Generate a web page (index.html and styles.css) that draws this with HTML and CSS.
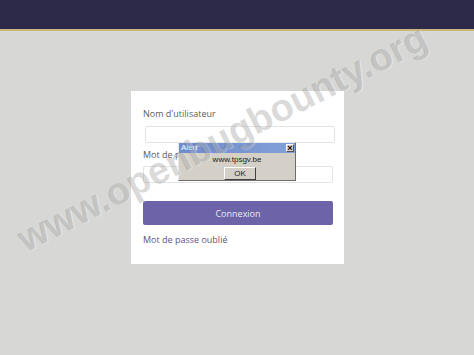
FILE: index.html
```html
<!DOCTYPE html>
<html lang="fr">
<head>
<meta charset="utf-8">
<title>Connexion</title>
<link rel="stylesheet" href="styles.css">
</head>
<body>
<header class="topbar"></header>
<main class="page">
  <form class="card">
    <label class="label">Nom d'utilisateur</label>
    <div class="input input-first"></div>
    <label class="label label-second">Mot de passe</label>
    <div class="input"></div>
    <div class="button">Connexion</div>
    <a class="link" href="#">Mot de passe oublié</a>
  </form>
</main>
<div class="alert">
  <div class="alert-title">
    <span>Alert</span>
    <span class="alert-close">×</span>
  </div>
  <div class="alert-body">
    <div class="alert-text">www.tpsgv.be</div>
    <div class="alert-ok">OK</div>
  </div>
</div>
<div class="watermark">www.openbugbounty.org</div>
</body>
</html>
```
FILE: styles.css
```css
html, body {
  margin: 0;
  padding: 0;
}
body {
  width: 474px;
  height: 355px;
  background: #d7d8d6;
  font-family: "Open Sans", "Liberation Sans", sans-serif;
  position: relative;
  overflow: hidden;
}
.topbar {
  height: 29px;
  background: #2d2948;
  border-bottom: 2px solid #cbb67c;
}
.page {
  display: flex;
  justify-content: center;
  padding-top: 60px;
}
.card {
  width: 213px;
  box-sizing: border-box;
  background: #ffffff;
  padding: 17px 11px 18px 12px;
  display: flex;
  flex-direction: column;
  margin-left: 1px;
}
.label {
  font-size: 9px;
  line-height: 12px;
  color: #5c5c5c;
}
.label-second {
  margin-top: 6px;
}
.input {
  height: 17px;
  box-sizing: border-box;
  border: 1px solid #e3e3e3;
  border-radius: 2px;
  margin-top: 5px;
  background: #fff;
}
.input-first {
  margin-left: 2px;
  margin-right: -2px;
  margin-top: 6px;
}
.button {
  margin-top: 18px;
  height: 24px;
  background: #6d63a9;
  border-radius: 2px;
  color: #ece9f6;
  font-size: 9px;
  display: flex;
  align-items: center;
  justify-content: center;
}
.link {
  margin-top: 9px;
  font-size: 9px;
  line-height: 12px;
  color: #5b547f;
  text-decoration: none;
}
.alert {
  position: absolute;
  left: 178px;
  top: 142px;
  width: 118px;
  height: 39px;
  box-sizing: border-box;
  background: #d4d0c8;
  border: 1px solid #6e6e6e;
  border-top-color: #e8e8e8;
  border-left-color: #e8e8e8;
  font-family: "Liberation Sans", Arial, sans-serif;
  display: flex;
  flex-direction: column;
}
.alert-title {
  height: 10px;
  background: linear-gradient(90deg, #6f8ccb, #84a0d8);
  color: #fff;
  font-size: 8px;
  line-height: 10px;
  padding-left: 2px;
  display: flex;
  justify-content: space-between;
  align-items: center;
}
.alert-close {
  width: 8px;
  height: 8px;
  margin-right: 1px;
  background: #d4d0c8;
  color: #000;
  font-size: 9px;
  line-height: 7px;
  text-align: center;
  font-weight: bold;
  box-sizing: border-box;
  border: 1px solid #555;
  border-top-color: #fff;
  border-left-color: #fff;
}
.alert-body {
  flex: 1;
  display: flex;
  flex-direction: column;
  align-items: center;
  padding-top: 2px;
}
.alert-text {
  font-size: 8px;
  line-height: 10px;
  color: #222;
}
.alert-ok {
  margin-top: 2px;
  width: 32px;
  height: 13px;
  box-sizing: border-box;
  border: 1px solid #404040;
  border-top-color: #fff;
  border-left-color: #fff;
  font-size: 8px;
  line-height: 11px;
  text-align: center;
  color: #222;
  margin-left: 6px;
}
.watermark {
  position: absolute;
  left: -8px;
  top: 116px;
  width: 460px;
  text-align: center;
  font-family: "Liberation Sans", Arial, sans-serif;
  font-weight: bold;
  font-size: 38px;
  line-height: 44px;
  color: rgba(90, 90, 90, 0.22);
  text-shadow: 1px 1px 0 rgba(255, 255, 255, 0.3);
  transform: rotate(-27deg);
  transform-origin: center;
  white-space: nowrap;
  pointer-events: none;
}
```
